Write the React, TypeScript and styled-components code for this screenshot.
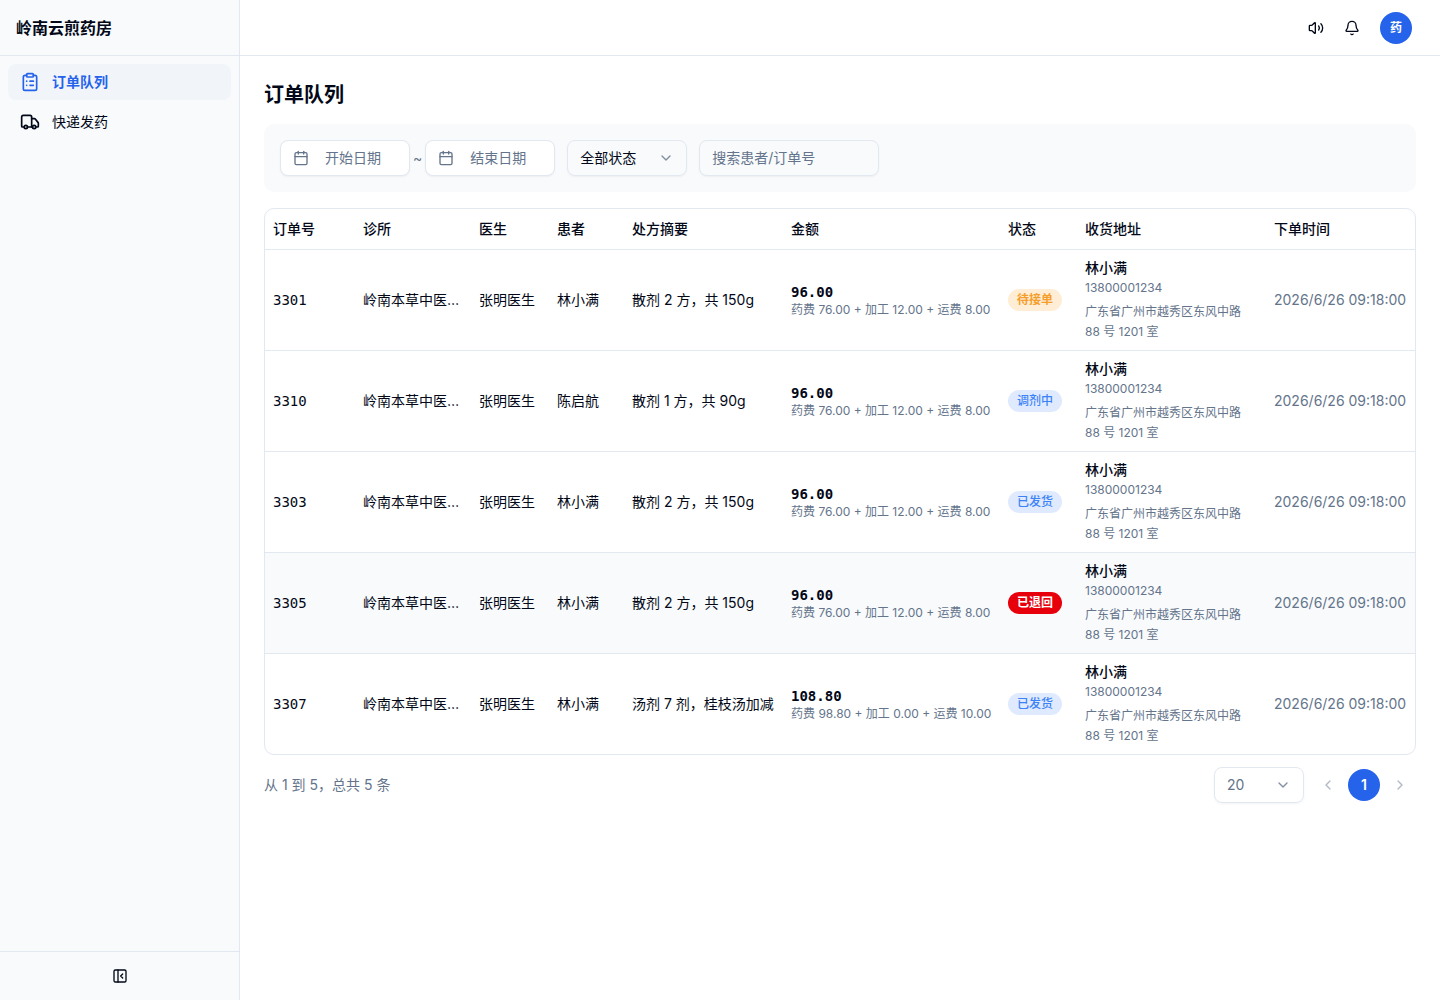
import React, { useState } from 'react';
import styled, { createGlobalStyle } from 'styled-components';
import {
  Bell,
  Calendar,
  ChevronDown,
  ChevronLeft,
  ChevronRight,
  ClipboardList,
  PanelLeftClose,
  Truck,
  Volume2,
} from 'lucide-react';

const color = {
  ink: '#020817',
  muted: '#64748b',
  line: '#e2e8f0',
  panel: '#f8fafc',
  active: '#f1f5f9',
  primary: '#2563eb',
};

const sans = "Inter, 'Noto Sans CJK SC', sans-serif";
const mono = "'DejaVu Sans Mono', monospace";

const GlobalStyle = createGlobalStyle`
  *, *::before, *::after { box-sizing: border-box; }
  body {
    margin: 0;
    background: #fff;
    color: ${color.ink};
    font-family: ${sans};
    font-size: 14px;
    line-height: 20px;
  }
  button, input, select { font: inherit; color: inherit; margin: 0; }
  button { cursor: pointer; }
`;

const Shell = styled.div`
  display: flex;
  min-height: 100vh;
`;

const Sidebar = styled.aside`
  display: flex;
  flex-direction: column;
  flex: none;
  width: 240px;
  background: ${color.panel};
  border-right: 1px solid ${color.line};
`;

const Brand = styled.div`
  display: flex;
  align-items: center;
  height: 56px;
  padding: 0 16px;
  border-bottom: 1px solid ${color.line};
  font-size: 16px;
  font-weight: 600;
  line-height: 24px;
`;

const Nav = styled.nav`
  display: flex;
  flex-direction: column;
  flex: 1;
  gap: 4px;
  padding: 8px;
`;

const NavLink = styled.a<{ $active?: boolean }>`
  display: flex;
  align-items: center;
  gap: 12px;
  height: 36px;
  padding: 0 12px;
  border-radius: 8px;
  text-decoration: none;
  background: ${(p) => (p.$active ? color.active : 'transparent')};
  color: ${(p) => (p.$active ? color.primary : color.ink)};
  font-weight: ${(p) => (p.$active ? 600 : 400)};
`;

const SidebarFooter = styled.div`
  display: flex;
  align-items: center;
  justify-content: center;
  height: 49px;
  border-top: 1px solid ${color.line};
`;

const IconButton = styled.button`
  display: flex;
  align-items: center;
  justify-content: center;
  width: 36px;
  height: 36px;
  padding: 0;
  border: 0;
  border-radius: 8px;
  background: transparent;
`;

const Main = styled.div`
  display: flex;
  flex-direction: column;
  flex: 1;
  min-width: 0;
`;

const TopBar = styled.header`
  display: flex;
  align-items: center;
  justify-content: flex-end;
  height: 56px;
  padding: 0 28px;
  border-bottom: 1px solid ${color.line};
`;

const Avatar = styled.button`
  width: 32px;
  height: 32px;
  margin-left: 10px;
  padding: 0;
  border: 0;
  border-radius: 50%;
  background: ${color.primary};
  color: #fff;
  font-size: 12px;
  font-weight: 600;
`;

const Content = styled.main`
  display: flex;
  flex-direction: column;
  padding: 24px;
`;

const Title = styled.h1`
  margin: 0 0 14px;
  font-size: 20px;
  font-weight: 600;
  line-height: 30px;
`;

const Filters = styled.form`
  display: flex;
  align-items: center;
  flex-wrap: wrap;
  gap: 12px;
  margin-bottom: 16px;
  padding: 16px;
  border-radius: 10px;
  background: ${color.panel};
`;

const DateRange = styled.div`
  display: flex;
  align-items: center;
  gap: 3px;
  color: ${color.muted};
`;

const DateButton = styled.button`
  display: flex;
  align-items: center;
  gap: 16px;
  width: 130px;
  height: 36px;
  padding: 0 12px;
  border: 1px solid ${color.line};
  border-radius: 8px;
  background: #fff;
  box-shadow: 0 1px 2px rgba(0, 0, 0, 0.05);
`;

const SelectBox = styled.label<{ $width: number; $muted?: boolean }>`
  position: relative;
  display: flex;
  width: ${(p) => p.$width}px;
  height: 36px;
  color: ${(p) => (p.$muted ? color.muted : color.ink)};

  svg {
    position: absolute;
    top: 10px;
    right: 13px;
    color: ${color.muted};
    opacity: 0.8;
    pointer-events: none;
  }
`;

const Select = styled.select`
  width: 100%;
  padding: 0 12px;
  border: 1px solid ${color.line};
  border-radius: 8px;
  background: transparent;
  box-shadow: 0 1px 2px rgba(0, 0, 0, 0.05);
  appearance: none;
`;

const Search = styled.input`
  width: 180px;
  height: 36px;
  padding: 0 12px 2px;
  border: 1px solid ${color.line};
  border-radius: 8px;
  background: transparent;
  box-shadow: 0 1px 2px rgba(0, 0, 0, 0.05);

  &::placeholder { color: ${color.muted}; opacity: 1; }
`;

const TableFrame = styled.div`
  overflow: hidden;
  border: 1px solid ${color.line};
  border-radius: 10px;
`;

const Table = styled.table`
  width: 100%;
  border-collapse: separate;
  border-spacing: 0;
  table-layout: fixed;
`;

const Col = styled.col<{ $width: number }>`
  width: ${(p) => p.$width}px;
`;

const Th = styled.th`
  height: 41px;
  padding: 0 8px;
  border-bottom: 1px solid ${color.line};
  font-weight: 500;
  text-align: left;
  white-space: nowrap;
`;

const Row = styled.tr<{ $tinted?: boolean }>`
  background: ${(p) => (p.$tinted ? color.panel : 'transparent')};

  &:not(:last-child) td { border-bottom: 1px solid ${color.line}; }
`;

const Td = styled.td<{ $muted?: boolean }>`
  padding: 8px;
  vertical-align: middle;
  white-space: nowrap;
  color: ${(p) => (p.$muted ? color.muted : 'inherit')};
`;

const OrderNo = styled.span`
  font-family: ${mono};
`;

const Amount = styled.div`
  font-family: ${mono};
  font-weight: 600;
`;

const AmountDetail = styled.div`
  color: ${color.muted};
  font-size: 12px;
  line-height: 16px;
`;

const tones = {
  orange: ['#ffedd5', '#f59e2b'],
  blue: ['#e0eaff', '#3b82f6'],
  red: ['#e7000b', '#ffffff'],
};

type Tone = keyof typeof tones;

const Badge = styled.span<{ $tone: Tone }>`
  display: flex;
  align-items: center;
  width: fit-content;
  height: 22px;
  padding: 0 9px;
  border-radius: 11px;
  background: ${(p) => tones[p.$tone][0]};
  color: ${(p) => tones[p.$tone][1]};
  font-size: 12px;
  font-weight: ${(p) => (p.$tone === 'blue' ? 500 : 600)};
  line-height: 16px;
`;

const Receiver = styled.div`
  font-weight: 500;
`;

const Phone = styled.div`
  color: ${color.muted};
  font-size: 12px;
`;

const Address = styled.div`
  max-width: 160px;
  margin-top: 4px;
  color: ${color.muted};
  font-size: 12px;
  white-space: normal;
`;

const Footer = styled.div`
  display: flex;
  align-items: center;
  justify-content: space-between;
  margin-top: 12px;
  color: ${color.muted};
`;

const Pager = styled.div`
  display: flex;
  align-items: center;
  gap: 8px;
`;

const Pages = styled.div`
  display: flex;
  align-items: center;
  gap: 4px;
`;

const PageButton = styled.button<{ $current?: boolean }>`
  display: flex;
  align-items: center;
  justify-content: center;
  width: 32px;
  height: 32px;
  padding: 0;
  border: 0;
  border-radius: 50%;
  background: ${(p) => (p.$current ? color.primary : 'transparent')};
  color: ${(p) => (p.$current ? '#fff' : color.muted)};
  font-weight: 600;

  &:disabled { opacity: 0.5; cursor: default; }
`;

const columns: [string, number][] = [
  ['订单号', 90],
  ['诊所', 116],
  ['医生', 78],
  ['患者', 75],
  ['处方摘要', 159],
  ['金额', 217],
  ['状态', 77],
  ['收货地址', 189],
  ['下单时间', 149],
];

interface Order {
  id: string;
  patient: string;
  summary: string;
  amount: string;
  detail: string;
  status: string;
  tone: Tone;
  tinted?: boolean;
}

const usual = '药费 76.00 + 加工 12.00 + 运费 8.00';

const orders: Order[] = [
  { id: '3301', patient: '林小满', summary: '散剂 2 方，共 150g', amount: '96.00', detail: usual, status: '待接单', tone: 'orange' },
  { id: '3310', patient: '陈启航', summary: '散剂 1 方，共 90g', amount: '96.00', detail: usual, status: '调剂中', tone: 'blue' },
  { id: '3303', patient: '林小满', summary: '散剂 2 方，共 150g', amount: '96.00', detail: usual, status: '已发货', tone: 'blue' },
  { id: '3305', patient: '林小满', summary: '散剂 2 方，共 150g', amount: '96.00', detail: usual, status: '已退回', tone: 'red', tinted: true },
  { id: '3307', patient: '林小满', summary: '汤剂 7 剂，桂枝汤加减', amount: '108.80', detail: '药费 98.80 + 加工 0.00 + 运费 10.00', status: '已发货', tone: 'blue' },
];

export default function App() {
  const [query, setQuery] = useState('');

  return (
    <>
      <GlobalStyle />
      <Shell>
        <Sidebar>
          <Brand>岭南云煎药房</Brand>
          <Nav>
            <NavLink href="#orders" $active aria-current="page">
              <ClipboardList size={20} />
              订单队列
            </NavLink>
            <NavLink href="#shipping">
              <Truck size={20} />
              快递发药
            </NavLink>
          </Nav>
          <SidebarFooter>
            <IconButton type="button" aria-label="收起侧栏">
              <PanelLeftClose size={16} />
            </IconButton>
          </SidebarFooter>
        </Sidebar>
        <Main>
          <TopBar>
            <IconButton type="button" aria-label="声音">
              <Volume2 size={16} />
            </IconButton>
            <IconButton type="button" aria-label="通知">
              <Bell size={16} />
            </IconButton>
            <Avatar type="button">药</Avatar>
          </TopBar>
          <Content>
            <Title>订单队列</Title>
            <Filters onSubmit={(e) => e.preventDefault()}>
              <DateRange>
                <DateButton type="button">
                  <Calendar size={16} />
                  开始日期
                </DateButton>
                <span>~</span>
                <DateButton type="button">
                  <Calendar size={16} />
                  结束日期
                </DateButton>
              </DateRange>
              <SelectBox $width={120}>
                <Select aria-label="状态" defaultValue="all">
                  <option value="all">全部状态</option>
                </Select>
                <ChevronDown size={16} />
              </SelectBox>
              <Search
                aria-label="搜索"
                placeholder="搜索患者/订单号"
                value={query}
                onChange={(e) => setQuery(e.target.value)}
              />
            </Filters>
            <TableFrame>
              <Table>
                <colgroup>
                  {columns.map(([name, width]) => (
                    <Col key={name} $width={width} />
                  ))}
                </colgroup>
                <thead>
                  <tr>
                    {columns.map(([name]) => (
                      <Th key={name} scope="col">{name}</Th>
                    ))}
                  </tr>
                </thead>
                <tbody>
                  {orders.map((o) => (
                    <Row key={o.id} $tinted={o.tinted}>
                      <Td><OrderNo>{o.id}</OrderNo></Td>
                      <Td>岭南本草中医…</Td>
                      <Td>张明医生</Td>
                      <Td>{o.patient}</Td>
                      <Td>{o.summary}</Td>
                      <Td>
                        <Amount>{o.amount}</Amount>
                        <AmountDetail>{o.detail}</AmountDetail>
                      </Td>
                      <Td><Badge $tone={o.tone}>{o.status}</Badge></Td>
                      <Td>
                        <Receiver>林小满</Receiver>
                        <Phone>13800001234</Phone>
                        <Address>广东省广州市越秀区东风中路 88 号 1201 室</Address>
                      </Td>
                      <Td $muted>2026/6/26 09:18:00</Td>
                    </Row>
                  ))}
                </tbody>
              </Table>
            </TableFrame>
            <Footer>
              <span>从 1 到 5，总共 5 条</span>
              <Pager>
                <SelectBox $width={90} $muted>
                  <Select aria-label="每页条数" defaultValue="20">
                    <option value="20">20</option>
                  </Select>
                  <ChevronDown size={16} />
                </SelectBox>
                <Pages>
                  <PageButton type="button" disabled aria-label="上一页">
                    <ChevronLeft size={16} />
                  </PageButton>
                  <PageButton type="button" $current>1</PageButton>
                  <PageButton type="button" disabled aria-label="下一页">
                    <ChevronRight size={16} />
                  </PageButton>
                </Pages>
              </Pager>
            </Footer>
          </Content>
        </Main>
      </Shell>
    </>
  );
}
